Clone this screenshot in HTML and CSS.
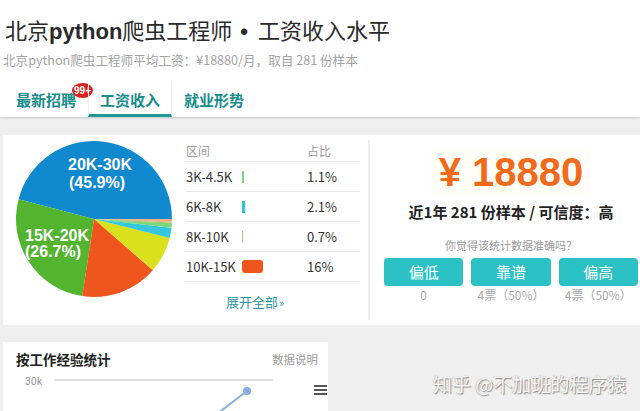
FILE: index.html
```html
<!DOCTYPE html>
<html lang="zh-CN">
<head>
<meta charset="utf-8">
<title>北京python爬虫工程师 • 工资收入水平</title>
<link rel="stylesheet" href="styles.css">
</head>
<body>
<div class="page">
  <header class="head">
    <h1 class="title">北京<b class="latin">python</b>爬虫工程师<b class="dot">•</b>工资收入水平</h1>
    <p class="sub">北京python爬虫工程师平均工资：¥18880/月，取自 281 份样本</p>
    <nav class="tabs">
      <a class="tab">最新招聘<span class="badge">99+</span></a>
      <a class="tab active">工资收入</a>
      <a class="tab">就业形势</a>
    </nav>
  </header>

  <section class="panel">
    <svg class="pie" viewBox="0 0 160 160" width="160" height="160">
      <path d="M80,80 L158,80 A78,78 0 0 0 4.57,60.13 Z" fill="#1089cf"/>
      <path d="M80,80 L4.57,60.13 A78,78 0 0 0 68.28,157.12 Z" fill="#52b42f"/>
      <path d="M80,80 L68.28,157.12 A78,78 0 0 0 138.86,131.21 Z" fill="#ef561d"/>
      <path d="M80,80 L138.86,131.21 A78,78 0 0 0 155.67,98.92 Z" fill="#dbe01c"/>
      <path d="M80,80 L155.67,98.92 A78,78 0 0 0 157.50,88.80 Z" fill="#35c6de"/>
      <path d="M80,80 L157.50,88.80 A78,78 0 0 0 157.92,83.43 Z" fill="#7fd77d"/>
      <path d="M80,80 L157.92,83.43 A78,78 0 0 0 158,80 Z" fill="#f4b187"/>
      <text class="pie-label" x="54" y="31">20K-30K</text>
      <text class="pie-label" x="55" y="49">(45.9%)</text>
      <text class="pie-label" x="11" y="102">15K-20K</text>
      <text class="pie-label" x="11" y="118">(26.7%)</text>
    </svg>

    <div class="dist">
      <div class="dist-row dist-head"><span>区间</span><span></span><span>占比</span></div>
      <div class="dist-row"><span>3K-4.5K</span><span><i class="bar bar-lg"></i></span><span>1.1%</span></div>
      <div class="dist-row"><span>6K-8K</span><span><i class="bar bar-cy"></i></span><span>2.1%</span></div>
      <div class="dist-row"><span>8K-10K</span><span><i class="bar bar-pe"></i></span><span>0.7%</span></div>
      <div class="dist-row"><span>10K-15K</span><span><i class="bar bar-or"></i></span><span>16%</span></div>
      <a class="more">展开全部<span class="raquo">»</span></a>
    </div>

    <div class="divider"></div>

    <div class="summary">
      <div class="price">¥ 18880</div>
      <div class="meta">近1年 281 份样本 / 可信度：高</div>
      <div class="ask">你觉得该统计数据准确吗？</div>
      <div class="votes">
        <span class="vote">偏低</span>
        <span class="vote">靠谱</span>
        <span class="vote">偏高</span>
      </div>
      <div class="counts">
        <span>0</span>
        <span>4票（50%）</span>
        <span>4票（50%）</span>
      </div>
    </div>
  </section>

  <section class="lower">
    <div class="card">
      <div class="card-head">
        <span class="card-title">按工作经验统计</span>
        <span class="card-link">数据说明</span>
      </div>
      <svg class="chart" viewBox="0 0 325 42" width="325" height="42">
        <text x="22" y="15" class="axis">30k</text>
        <rect x="51" y="9" width="219" height="2" fill="#e0e0e0"/>
        <line x1="244" y1="21" x2="214" y2="44" stroke="#86afdf" stroke-width="2"/>
        <circle cx="244" cy="21" r="4" fill="#86afdf"/>
        <rect x="311" y="15" width="13" height="2" fill="#555"/>
        <rect x="311" y="19" width="13" height="2" fill="#555"/>
        <rect x="311" y="23" width="13" height="2" fill="#555"/>
      </svg>
    </div>
    <div class="watermark">知乎 @不加班的程序猿</div>
  </section>
</div>
</body>
</html>
```

FILE: styles.css
```css
html, body {
  margin: 0;
  padding: 0;
}

body {
  background: #efefef;
  font-family: "Noto Sans CJK SC", "Liberation Sans", sans-serif;
  color: #333;
  overflow: hidden;
}

.page {
  width: 640px;
  height: 411px;
  overflow: hidden;
}

/* ---------- header ---------- */
.head {
  background: #fff;
  padding: 14px 0 0 4px;
  box-shadow: 0 1px 2px rgba(0, 0, 0, 0.18);
  position: relative;
}

.title {
  margin: 0 0 0 1px;
  height: 30px;
  font-size: 22px;
  line-height: 30px;
  font-weight: 400;
  color: #2a2a2a;
  white-space: nowrap;
}

.latin {
  font-family: "Liberation Sans", sans-serif;
  font-weight: 700;
}

.dot {
  font-family: "Liberation Sans", sans-serif;
  font-weight: 700;
  margin: 0 10px 0 8px;
}

.sub {
  margin: 7px 0 0 -1px;
  height: 18px;
  font-size: 12.6px;
  line-height: 18px;
  color: #a3a3a3;
  white-space: nowrap;
}

.tabs {
  display: flex;
  margin-top: 14px;
  height: 34px;
}

.tab {
  position: relative;
  width: 84px;
  box-sizing: border-box;
  padding-top: 3px;
  text-align: center;
  font-size: 15px;
  font-weight: 700;
  line-height: 28px;
  color: #178c8a;
  border-bottom: 3px solid transparent;
}

.tab.active {
  border-bottom-color: #1f9797;
  border-left: 1px solid #f0f0f0;
  border-right: 1px solid #f0f0f0;
}

.badge {
  position: absolute;
  left: 68px;
  top: 0;
  width: 21px;
  height: 15px;
  border-radius: 50%;
  background: #d6241d;
  color: #fff;
  font: bold 10px/15px "Liberation Sans", sans-serif;
  text-align: center;
}

/* ---------- main panel ---------- */
.panel {
  margin: 18px 0 0 3px;
  height: 190px;
  background: #fff;
  display: flex;
  align-items: flex-start;
}

.pie {
  flex: none;
  margin: 4px 0 0 11px;
}

.pie-label {
  font: bold 16px "Liberation Sans", sans-serif;
  fill: #fff;
}

.dist {
  flex: none;
  width: 175px;
  margin: 5px 0 0 11px;
}

.dist-row {
  display: grid;
  grid-template-columns: 56px 65px 1fr;
  align-items: center;
  height: 29px;
  border-bottom: 1px solid #e8e8e8;
  font-size: 13px;
  color: #333;
  padding-left: 1px;
}

.dist-head {
  height: 21px;
  font-size: 12px;
  color: #9a9a9a;
}

.bar {
  display: block;
  height: 12px;
}

.bar-lg { width: 2px; background: #7fd77d; }
.bar-cy { width: 3px; background: #2ec5d8; }
.bar-pe { width: 1px; background: #f4b187; }
.bar-or { width: 21px; height: 13px; border-radius: 3px; background: #ef561d; }

.more {
  display: block;
  margin-top: 12px;
  padding-left: 41px;
  font-size: 13px;
  line-height: 16px;
  color: #1e9a9a;
}

.raquo {
  font-size: 11px;
  margin-left: 1px;
}

.divider {
  flex: none;
  width: 2px;
  height: 180px;
  margin: 5px 0 0 8px;
  background: #ececec;
}

.summary {
  flex: 1;
  padding: 13px 2px 0 14px;
  text-align: center;
}

.price {
  display: inline-block;
  padding: 0 8px;
  font: bold 40px/48px "Liberation Sans", sans-serif;
  color: #f26b1d;
  background: #fffdf8;
}

.meta {
  margin-top: 6px;
  font-size: 15px;
  line-height: 20px;
  font-weight: 700;
  color: #222;
}

.ask {
  margin-top: 15px;
  font-size: 11px;
  line-height: 16px;
  color: #999;
}

.votes,
.counts {
  display: grid;
  grid-template-columns: repeat(3, 1fr);
  column-gap: 8px;
}

.votes {
  margin-top: 5px;
}

.vote {
  height: 28px;
  line-height: 28px;
  border-radius: 4px;
  background: #2cc1c5;
  color: #fff;
  font-size: 15px;
}

.counts {
  margin-top: 1px;
  font-size: 12px;
  line-height: 16px;
  color: #aaa;
}

/* ---------- lower area ---------- */
.lower {
  position: relative;
  margin-top: 17px;
  display: flex;
}

.card {
  margin-left: 3px;
  width: 325px;
  height: 80px;
  box-sizing: border-box;
  padding-top: 9px;
  background: #fff;
}

.card-head {
  display: flex;
  justify-content: space-between;
  align-items: center;
  padding: 0 10px 0 13px;
  line-height: 16px;
}

.card-title {
  font-size: 13.5px;
  font-weight: 700;
  color: #222;
}

.card-link {
  font-size: 11.5px;
  color: #9a9a9a;
}

.chart {
  display: block;
  margin-top: 3px;
}

.axis {
  font: 10px "Liberation Sans", sans-serif;
  fill: #888;
  letter-spacing: 0.5px;
}

.watermark {
  position: absolute;
  left: 433px;
  top: 30px;
  font-size: 19px;
  line-height: 24px;
  color: #f7f7f7;
  text-shadow: 1px 1px 1px #8a8a8a, -1px 0 0 #c8c8c8;
  white-space: nowrap;
}
```
